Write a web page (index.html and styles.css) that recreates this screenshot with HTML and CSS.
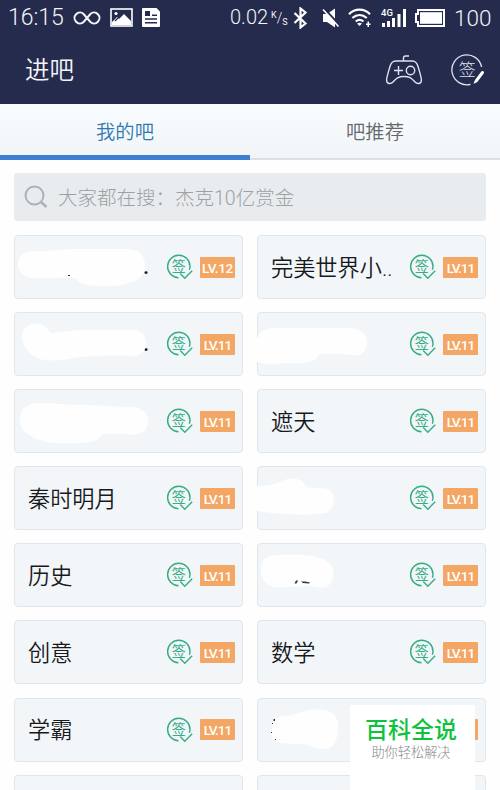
FILE: index.html
```html
<!DOCTYPE html>
<html lang="zh-CN">
<head>
    <meta charset="utf-8">
    <title>进吧</title>
    <link rel="stylesheet" href="styles.css">
</head>
<body>
    <!-- Shared icons -->
    <svg class="icon-defs" width="0" height="0">
        <symbol id="signed" viewBox="0 0 28 26">
            <path d="M12.5 23.7A11.2 11.2 0 1 1 24 12.5c0 1.3-.3 2.4-.7 3.3M14.2 19.6l4.6 4.6 7.4-7.4" fill="none" stroke="#35ad83" stroke-width="1.4"/>
            <text x="12.7" y="17.2" text-anchor="middle" class="stamp-text">签</text>
        </symbol>
    </svg>

    <div class="header">
        <div class="status-bar">
            <span class="time">16:15</span>
            <svg class="infinity" width="28" height="16" viewBox="0 0 28 16">
                <path d="M14 8L10.600 4A5.400 5.400 0 1 0 10.600 12L17.400 4A5.400 5.400 0 1 1 17.400 12z" fill="none" stroke="#f3f4fa" stroke-width="2"/>
            </svg>
            <svg class="picture" width="23" height="19" viewBox="0 0 23 19">
                <rect x="1" y="1" width="21" height="17" fill="none" stroke="#fff" stroke-width="1.600"/>
                <circle cx="6" cy="5.500" r="1.600" fill="#fff"/>
                <path d="M2 17v-3l5-5 2 2 5-5 7 7v4z" fill="#fff"/>
                <path d="M5 13l3-3" stroke="#242b4c" stroke-width="1.200"/>
            </svg>
            <svg class="news" width="19" height="19" viewBox="0 0 19 19">
                <path d="M1 0h13.500L18 3.500V18a1 1 0 0 1-1 1H1a1 1 0 0 1-1-1V1a1 1 0 0 1 1-1z" fill="#fff"/>
                <path d="M3 3h5v5H3zM10 6.500h5V8h-5zM3 10.300h12v1.500H3zM3 14h12v1.500H3z" fill="#242b4c"/>
            </svg>
            <span class="speed">0.02</span>
            <span class="unit"><sup>K</sup>/<sub>S</sub></span>
            <svg class="bluetooth" width="15" height="22" viewBox="0 0 15 22">
                <path d="M1.500 6l11 10.500-5 4V1.500l5 4L1.500 16" fill="none" stroke="#fff" stroke-width="2.200"/>
            </svg>
            <svg class="mute" width="18" height="20" viewBox="0 0 18 20">
                <path d="M1 6h4l8-5.500v19L5 14H1z" fill="#fff"/>
                <path d="M2.500 1L18 17.500" stroke="#242b4c" stroke-width="2"/>
                <path d="M1 1.500L16.500 18.500" stroke="#fff" stroke-width="1.600"/>
            </svg>
            <svg class="wifi" width="24" height="19" viewBox="0 0 24 19">
                <path d="M1 6.200c6-6 15-6 21 0M4.300 10c4.500-4 10-4 14.500 0M7.700 13.500c2.500-2 5.300-2 7.800 0" fill="none" stroke="#fff" stroke-width="2.200"/>
                <path d="M9 15.500q2.500-1.500 5 0L11.500 18zM19.500 13.500h1.500v2h1.500v1.500H21v2h-1.500v-2H18v-1.500h1.500z" fill="#fff"/>
            </svg>
            <svg class="signal" width="26" height="20" viewBox="0 0 26 20">
                <text x="0" y="8" class="signal-text">4G</text>
                <path d="M1 15h3v4H1zM6 13h3v6H6zM11 10h3v9h-3zM16.500 6h3v13h-3zM22 1h3v18h-3z" fill="#fff"/>
            </svg>
            <svg class="battery" width="30" height="18" viewBox="0 0 30 18">
                <path d="M3 1h26v16H3v-4H1V5h2z" fill="none" stroke="#fff" stroke-width="2"/>
                <rect x="5" y="3.200" width="22" height="11.600" fill="#fff"/>
            </svg>
            <span class="percent">100</span>
        </div>
        <div class="title-bar">
            <h1>进吧</h1>
            <svg class="gamepad" width="38" height="32" viewBox="0 0 38 32">
                <path d="M10.500 7h17c3.500 0 4.700 2.500 5.700 6 1.600 5.500 3.200 10.500 3.200 13 0 4.500-4.200 4.200-6.700 1.700-3.200-3.200-4.500-5.200-10.700-5.200S11.500 24.500 8.300 27.700C5.800 30.200 1.600 30.500 1.600 26c0-2.500 1.600-7.500 3.200-13 1-3.500 2.200-6 5.700-6zM18.500 7V3.800Q18.500 2 20.500 2H24M9 16.500h9M13.500 12v9" fill="none" stroke="#dfe1ee" stroke-width="1.400"/>
                <circle cx="25.500" cy="16.500" r="4.200" fill="none" stroke="#dfe1ee" stroke-width="1.400"/>
            </svg>
            <svg class="sign-all" width="34" height="32" viewBox="0 0 34 32">
                <path d="M19.500 30.400A15 15 0 1 1 30.600 13" fill="none" stroke="#dfe1ee" stroke-width="1.300"/>
                <text x="16.200" y="21.500" text-anchor="middle" class="sign-all-text">签</text>
                <path d="M25.500 26.500l6-8" stroke="#fff" stroke-width="3" stroke-linecap="round"/>
                <path d="M22.500 29.800l1.200-3.300 2.400 1.800z" fill="#fff"/>
            </svg>
        </div>
    </div>

    <div class="tabs">
        <div class="tab active">我的吧</div>
        <div class="tab">吧推荐</div>
    </div>

    <div class="search">
        <svg width="24" height="24" viewBox="0 0 24 24">
            <circle cx="10.500" cy="10.500" r="9" fill="none" stroke="#abb0b3" stroke-width="1.900"/>
            <path d="M17 17l5.500 5" stroke="#abb0b3" stroke-width="2.400"/>
        </svg>
        <span>大家都在搜：杰克10亿赏金</span>
    </div>

    <div class="forum-list">
        <div class="forum">
            <span class="name dots">.</span>
            <svg class="smudge" width="229" height="64" viewBox="0 0 229 64">
                <path d="M4 29C4 20 10 16 20 16C35 17 43 14 60 14H115C126 15 131 21 131 31C131 43 123 45 112 49C97 53 67 53 61 43C45 42 30 44 18 43C8 41 4 37 4 29z"/>
                <path class="ink" d="M54 40h2v1h-2z"/>
            </svg>
            <svg class="signed" width="28" height="26"><use href="#signed"/></svg>
            <span class="level wide">LV.12</span>
        </div>
        <div class="forum">
            <span class="name">完美世界小..</span>
            <svg class="signed" width="28" height="26"><use href="#signed"/></svg>
            <span class="level">LV.11</span>
        </div>
        <div class="forum">
            <span class="name dots">.</span>
            <svg class="smudge" width="229" height="64" viewBox="0 0 229 64">
                <path d="M8 25C8 17 13 12 22 12C31 12 33 17 37 21C48 21 54 18 68 18H120C128 19 132 24 132 31C132 39 127 44 119 44C89 43 75 44 60 46C48 49 27 50 19 44C11 38 9 32 8 25z"/>
            </svg>
            <svg class="signed" width="28" height="26"><use href="#signed"/></svg>
            <span class="level">LV.11</span>
        </div>
        <div class="forum">
            <span class="name"></span>
            <svg class="smudge" width="229" height="64" viewBox="0 0 229 64">
                <path d="M0 26C4 18 10 16 20 16H90C103 16 110 21 110 30C110 40 104 45 93 43C80 42 70 41 62 43C57 51 46 52 32 51C17 52 9 53 0 50z"/>
            </svg>
            <svg class="signed" width="28" height="26"><use href="#signed"/></svg>
            <span class="level">LV.11</span>
        </div>
        <div class="forum">
            <span class="name"></span>
            <svg class="smudge" width="229" height="64" viewBox="0 0 229 64">
                <path d="M6 30C6 20 13 14 25 14C42 14 50 16 68 16C86 16 99 18 117 18C128 18 134 24 134 32C134 41 128 46 118 46C107 44 99 45 88 45C84 55 68 54 55 54C38 55 25 52 17 47C9 43 6 38 6 30z"/>
            </svg>
            <svg class="signed" width="28" height="26"><use href="#signed"/></svg>
            <span class="level">LV.11</span>
        </div>
        <div class="forum">
            <span class="name">遮天</span>
            <svg class="signed" width="28" height="26"><use href="#signed"/></svg>
            <span class="level">LV.11</span>
        </div>
        <div class="forum">
            <span class="name">秦时明月</span>
            <svg class="signed" width="28" height="26"><use href="#signed"/></svg>
            <span class="level">LV.11</span>
        </div>
        <div class="forum">
            <span class="name"></span>
            <svg class="smudge" width="229" height="64" viewBox="0 0 229 64">
                <path d="M0 20C10 20 20 18 27 14C35 11 46 12 49 21C57 23 64 21 71 23C80 28 78 44 69 47C51 50 18 48 0 45z"/>
            </svg>
            <svg class="signed" width="28" height="26"><use href="#signed"/></svg>
            <span class="level">LV.11</span>
        </div>
        <div class="forum">
            <span class="name">历史</span>
            <svg class="signed" width="28" height="26"><use href="#signed"/></svg>
            <span class="level">LV.11</span>
        </div>
        <div class="forum">
            <span class="name"></span>
            <svg class="smudge" width="229" height="64" viewBox="0 0 229 64">
                <path d="M4 26C4 17 10 12 21 12C42 11 59 12 68 17C78 22 79 34 73 41C69 47 61 44 54 43C42 43 28 45 17 44C8 42 4 36 4 26z"/>
                <path class="ink" d="M37.500 40.500l1.500-3h2l-1.500 3zM44 38.500h4l5 1-1 1-6-.6z"/>
            </svg>
            <svg class="signed" width="28" height="26"><use href="#signed"/></svg>
            <span class="level">LV.11</span>
        </div>
        <div class="forum">
            <span class="name">创意</span>
            <svg class="signed" width="28" height="26"><use href="#signed"/></svg>
            <span class="level">LV.11</span>
        </div>
        <div class="forum">
            <span class="name">数学</span>
            <svg class="signed" width="28" height="26"><use href="#signed"/></svg>
            <span class="level">LV.11</span>
        </div>
        <div class="forum">
            <span class="name">学霸</span>
            <svg class="signed" width="28" height="26"><use href="#signed"/></svg>
            <span class="level">LV.11</span>
        </div>
        <div class="forum">
            <span class="name"></span>
            <svg class="smudge" width="229" height="64" viewBox="0 0 229 64">
                <path d="M15 30C15 22 20 18 29 18C38 17 43 13 55 12C72 10 81 16 81 27C81 42 77 51 69 51C58 52 52 46 44 46C33 46 23 46 18 43C14 39 14 35 15 30z"/>
                <path class="ink" d="M16.500 21h1.500v2h-1.500zM15 25h1v1h-1zM14 34h1v1h-1zM18 41h1v1h-1z"/>
            </svg>
            <svg class="signed" width="28" height="26"><use href="#signed"/></svg>
            <span class="level">LV.11</span>
        </div>
        <div class="forum"></div>
        <div class="forum"></div>
    </div>

    <div class="watermark">
        <div class="brand">百科全说</div>
        <div class="slogan">助你轻松解决</div>
    </div>
</body>
</html>
```
FILE: styles.css
```css
html {
    overflow: hidden;
}
body {
    position: relative;
    display: flex;
    flex-direction: column;
    width: 500px;
    height: 790px;
    margin: 0;
    overflow: hidden;
    background-color: #fefefe;
    font-family: Roboto, "Noto Sans CJK SC", sans-serif;
    font-weight: 300;
}
svg {
    display: block;
    flex-shrink: 0;
}
.icon-defs {
    display: none;
}
.header {
    flex-shrink: 0;
    height: 104px;
    background-color: #242b4c;
    color: #f3f4fa;
}
.status-bar {
    display: flex;
    align-items: center;
    height: 35px;
}
.time {
    width: 55px;
    margin-left: 8px;
    font-size: 23px;
}
.infinity {
    margin-left: 10px;
}
.picture {
    margin-left: 9px;
}
.news {
    margin-left: 9px;
}
.speed {
    width: 37px;
    margin: -1px 0 0 69px;
    font-size: 20px;
}
.unit {
    width: 15px;
    margin-left: 4px;
    font-size: 14px;
    line-height: 20px;
    white-space: nowrap;
}
.unit sup, .unit sub {
    font-size: 9px;
    font-weight: 400;
    line-height: 0;
}
.unit sup {
    vertical-align: 5px;
}
.unit sub {
    vertical-align: -2px;
}
.bluetooth {
    margin-left: 7px;
}
.mute {
    margin-left: 14px;
}
.wifi {
    margin-left: 8px;
}
.signal {
    margin-left: 9px;
}
.signal-text {
    font-size: 9.5px;
    font-weight: 500;
    fill: #fff;
}
.battery {
    margin-left: 8px;
}
.percent {
    margin-left: 9px;
    font-size: 22.5px;
}
.title-bar {
    display: flex;
    align-items: center;
    height: 69px;
    padding: 0 15px 0 25px;
}
.title-bar h1 {
    flex: 1;
    margin: -2px 0 0;
    font-size: 24.5px;
    font-weight: 350;
}
.gamepad {
    margin-right: 28px;
}
.sign-all-text {
    font-size: 17px;
    fill: #dfe1ee;
}
.tabs {
    display: flex;
    flex-shrink: 0;
    height: 56px;
    background: linear-gradient(#f9fcfe, #f1f5f8);
}
.tab {
    flex: 1;
    box-sizing: border-box;
    border-bottom: 2px solid #dbe0e4;
    color: #63686b;
    font-size: 19.3px;
    font-weight: 350;
    line-height: 58px;
    text-align: center;
}
.tab.active {
    border-bottom: 5px solid #407fd2;
    color: #3079b0;
}
.search {
    display: flex;
    flex-shrink: 0;
    align-items: center;
    height: 48px;
    margin: 13px 14px 14px;
    padding-left: 10px;
    border-radius: 3px;
    background-color: #e8ecef;
    color: #9da1a4;
    font-size: 19.5px;
}
.search span {
    margin: -1px 0 0 10px;
}
.forum-list {
    display: grid;
    flex: 1;
    grid-template-columns: 229px 229px;
    grid-auto-rows: 64px;
    gap: 13.1px 14px;
    min-height: 0;
    margin: 0 14px;
    overflow: hidden;
}
.forum {
    position: relative;
    display: flex;
    align-items: center;
    box-sizing: border-box;
    padding: 0 7px 0 13px;
    border: 1px solid #e0e6eb;
    border-radius: 4px;
    background-color: #f2f6f9;
}
.name {
    flex: 1;
    margin-top: -3px;
    color: #17191c;
    font-size: 22.2px;
    font-weight: 350;
    white-space: nowrap;
}
.dots {
    padding-left: 115px;
    font-weight: 500;
}
.smudge {
    position: absolute;
    top: -1px;
    left: -1px;
    fill: #fefefe;
}
.smudge .ink {
    fill: #333;
}
.stamp-text {
    font-size: 14px;
    font-weight: 400;
    fill: #35ad83;
}
.signed {
    margin-right: 6px;
}
.level {
    width: 35px;
    height: 21px;
    border-radius: 1px;
    background-color: #f4a664;
    color: #fff;
    font-size: 13.5px;
    font-weight: 500;
    letter-spacing: -1px;
    line-height: 22px;
    text-align: center;
}
.level.wide {
    letter-spacing: -0.3px;
}
.watermark {
    position: absolute;
    top: 705px;
    left: 350px;
    width: 125px;
    height: 85px;
    background-color: #fff;
    text-align: center;
}
.brand {
    margin: 9px 0 0 -3px;
    color: #0dc33b;
    font-size: 23px;
    font-weight: 500;
    line-height: 34px;
}
.slogan {
    margin: -1px 0 0 -3px;
    color: #888;
    font-size: 13.2px;
    line-height: 11px;
}
```
